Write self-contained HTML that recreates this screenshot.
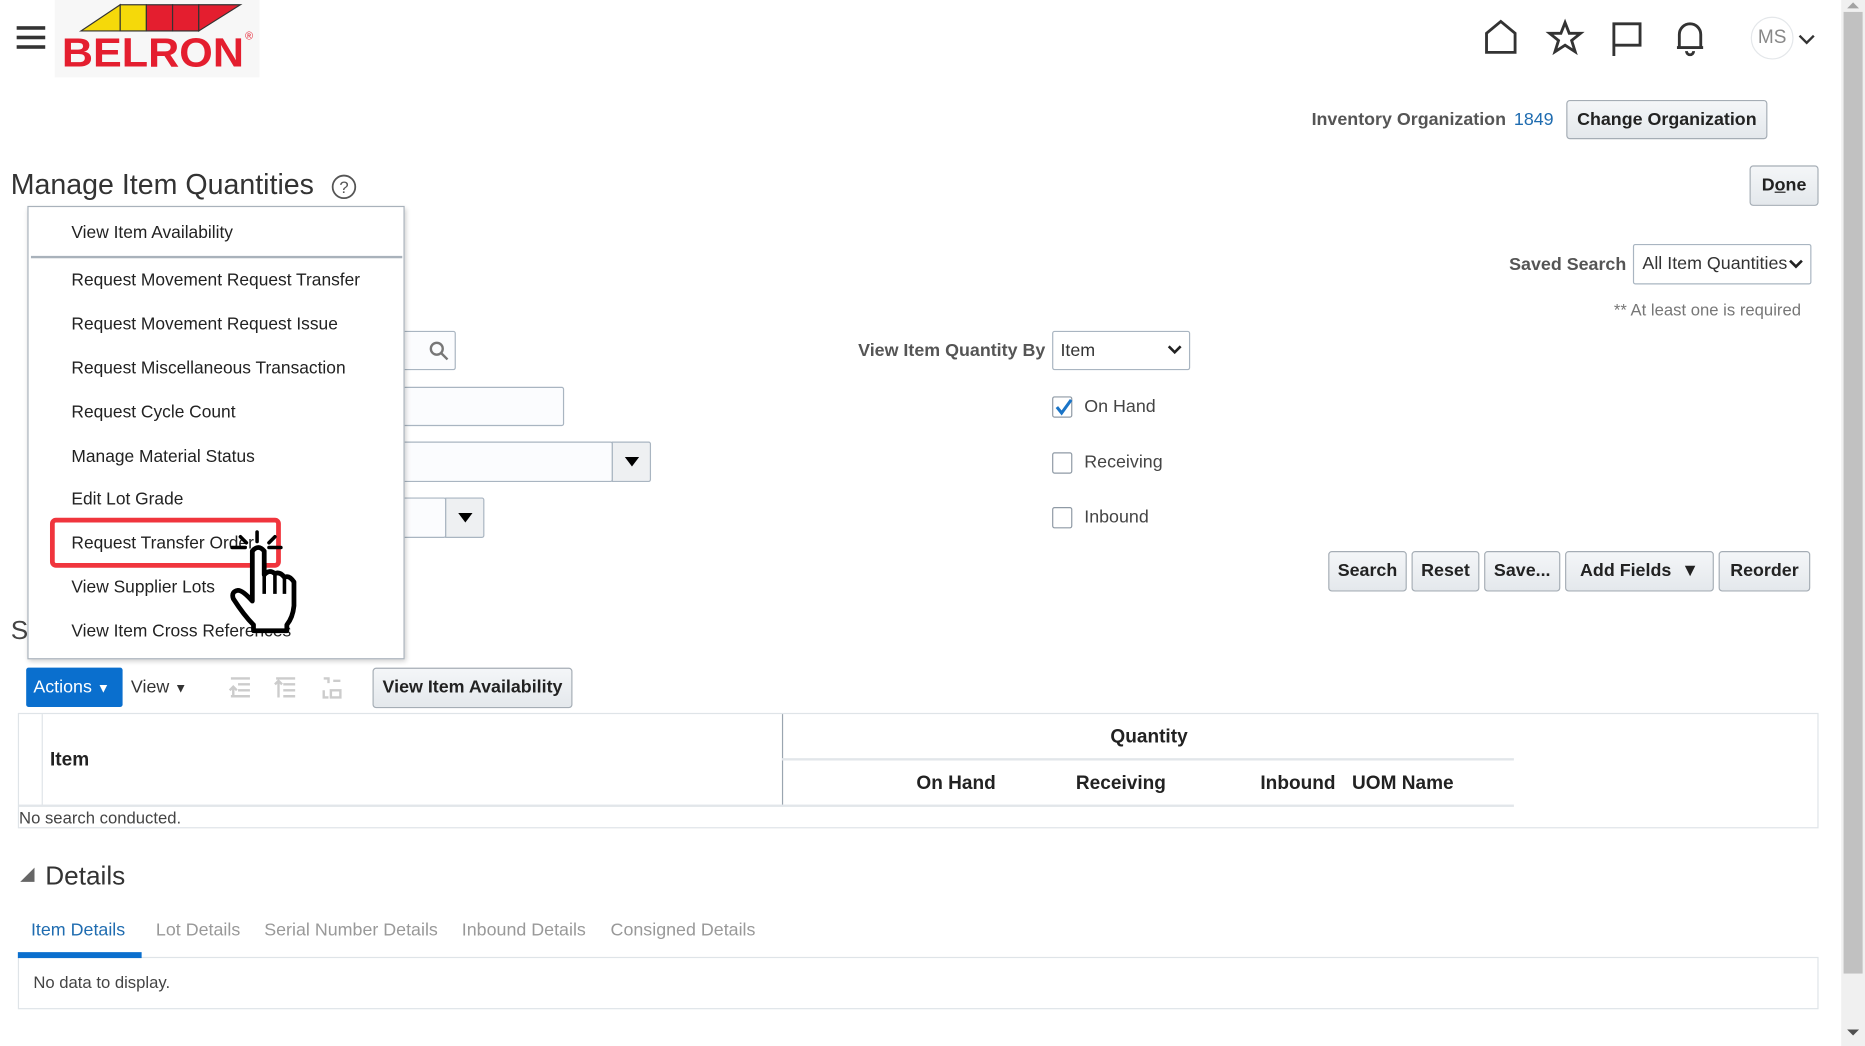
<!DOCTYPE html>
<html><head><meta charset="utf-8">
<style>
html,body{margin:0;padding:0;width:1865px;height:1046px;overflow:hidden;background:#fff;}
#w{position:absolute;left:0;top:0;width:1567px;height:879px;transform:scale(1.19017);transform-origin:0 0;font-family:"Liberation Sans",Arial,sans-serif;color:#333;}
.a{position:absolute;}
.btn{position:absolute;box-sizing:border-box;border:1px solid #a5adb5;border-radius:3px;background:linear-gradient(#f4f6f8,#e4e8ec);font-weight:bold;font-size:15px;color:#222;text-align:center;}
.inp{position:absolute;box-sizing:border-box;border:1px solid #a9b5c1;border-radius:2px;background:#fbfcfe;}
.dd{position:absolute;box-sizing:border-box;border:1px solid #a9b5c1;background:#eef0f2;border-radius:0 2px 2px 0;}
.dd:after{content:"";position:absolute;left:50%;top:50%;margin:-4px 0 0 -6px;border:6px solid transparent;border-top:8px solid #000;border-bottom:0;}
.mi{position:absolute;font-size:14.6px;color:#222;}
.cb{position:absolute;width:17px;height:18px;box-sizing:border-box;border:1px solid #8f9aa5;border-radius:2px;background:#fff;}
.lbl{position:absolute;font-size:15px;color:#444;}
</style></head><body><div id="w">

<div class="a" style="left:14px;top:22px;width:24px;height:3px;background:#333"></div>
<div class="a" style="left:14px;top:30px;width:24px;height:3px;background:#333"></div>
<div class="a" style="left:14px;top:38px;width:24px;height:3px;background:#333"></div>
<div class="a" style="left:46px;top:0;width:172px;height:65px;background:#f7f7f7"></div>
<svg class="a" style="left:46px;top:0" width="172" height="65">
<polygon points="22,26 55,4 55,26" fill="#f5d90a" stroke="#333" stroke-width="1"/>
<rect x="55" y="4" width="22" height="22" fill="#f5d90a" stroke="#333" stroke-width="1"/>
<rect x="77" y="4" width="22" height="22" fill="#e41e2f" stroke="#333" stroke-width="1"/>
<rect x="99" y="4" width="22" height="22" fill="#e41e2f" stroke="#333" stroke-width="1"/>
<polygon points="121,4 156,4 121,26" fill="#e41e2f" stroke="#333" stroke-width="1"/>
<text x="6" y="56" font-family="Liberation Sans" font-weight="bold" font-size="34" textLength="153" lengthAdjust="spacingAndGlyphs" fill="#e41e2f">BELRON</text>
<text x="160" y="33" font-family="Liberation Sans" font-size="9" fill="#e41e2f">®</text>
</svg>
<svg class="a" style="left:1245px;top:15px" width="300" height="36" fill="none" stroke="#333" stroke-width="2.4">
<path d="M4 29 V13 L16 3 L28 13 V29 Z"/>
<path d="M70 4 L73.5 13 L83 13 L75.5 19 L78.5 28.5 L70 23 L61.5 28.5 L64.5 19 L57 13 L66.5 13 Z"/>
<path d="M111 32 V5 H133 V23 H111"/>
<path d="M166 25 V14 a9 9 0 0 1 18 0 V25 H164 M186 25 H164 M172 28 a3 3 0 0 0 6 0"/>
</svg>
<div class="a" style="left:1471px;top:14px;width:36px;height:36px;border:1px solid #e4e7ea;border-radius:50%;box-sizing:border-box;font-size:16px;color:#888;text-align:center;line-height:34px">MS</div>
<svg class="a" style="left:1511px;top:28px" width="14" height="10" fill="none" stroke="#333" stroke-width="2"><path d="M1 2 L7 8 L13 2"/></svg>

<div class="a" style="left:1102px;top:92px;font-size:15px;font-weight:bold;color:#555">Inventory Organization</div>
<div class="a" style="left:1272px;top:92px;font-size:15px;color:#1f6cb0">1849</div>
<div class="btn" style="left:1316px;top:84px;width:169px;height:33px;line-height:31px">Change Organization</div>
<div class="btn" style="left:1470px;top:139px;width:58px;height:34px;line-height:32px"><span>D<u>o</u>ne</span></div>

<div class="a" style="left:9px;top:142px;font-size:24px;color:#333">Manage Item Quantities</div>
<svg class="a" style="left:278px;top:146px" width="22" height="22"><circle cx="11" cy="11" r="9.5" fill="none" stroke="#555" stroke-width="1.5"/><text x="11" y="16" text-anchor="middle" font-family="Liberation Sans" font-size="14" fill="#555">?</text></svg>

<div class="a" style="left:1268px;top:214px;font-size:15px;font-weight:bold;color:#555">Saved Search</div>
<div class="inp" style="left:1372px;top:205px;width:150px;height:34px;background:#fff;font-size:15px;color:#333;line-height:32px;padding-left:7px">All Item Quantities</div>
<svg class="a" style="left:1503px;top:218px" width="12" height="9" fill="none" stroke="#222" stroke-width="2.2"><path d="M1 1 L6 6 L11 1"/></svg>
<div class="a" style="left:1356px;top:252px;font-size:14px;color:#777">** At least one is required</div>

<div class="inp" style="left:300px;top:278px;width:83px;height:33px"></div>
<svg class="a" style="left:360px;top:286px" width="18" height="18" fill="none" stroke="#777" stroke-width="2"><circle cx="7" cy="7" r="5"/><path d="M11 11 L16 16"/></svg>
<div class="inp" style="left:300px;top:325px;width:174px;height:33px"></div>
<div class="inp" style="left:300px;top:371px;width:215px;height:34px"></div>
<div class="dd" style="left:514px;top:371px;width:33px;height:34px"></div>
<div class="inp" style="left:300px;top:418px;width:75px;height:34px"></div>
<div class="dd" style="left:374px;top:418px;width:33px;height:34px"></div>

<div class="a" style="left:721px;top:286px;font-size:15px;font-weight:bold;color:#555">View Item Quantity By</div>
<div class="inp" style="left:884px;top:278px;width:116px;height:33px;background:#fff;font-size:15px;line-height:31px;padding-left:6px;color:#333">Item</div>
<svg class="a" style="left:981px;top:290px" width="12" height="9" fill="none" stroke="#222" stroke-width="2.2"><path d="M1 1 L6 6 L11 1"/></svg>
<div class="cb" style="left:884px;top:333px"></div>
<svg class="a" style="left:885px;top:333px" width="18" height="18" fill="none" stroke="#1a74c7" stroke-width="2.6"><path d="M3 9 L7 14 L15 3"/></svg>
<div class="lbl" style="left:911px;top:333px">On Hand</div>
<div class="cb" style="left:884px;top:380px"></div>
<div class="lbl" style="left:911px;top:380px">Receiving</div>
<div class="cb" style="left:884px;top:426px"></div>
<div class="lbl" style="left:911px;top:426px">Inbound</div>

<div class="btn" style="left:1116px;top:463px;width:66px;height:34px;line-height:32px">Search</div>
<div class="btn" style="left:1186px;top:463px;width:57px;height:34px;line-height:32px">Reset</div>
<div class="btn" style="left:1247px;top:463px;width:64px;height:34px;line-height:32px">Save...</div>
<div class="btn" style="left:1315px;top:463px;width:125px;height:34px;line-height:32px">Add Fields &nbsp;▼</div>
<div class="btn" style="left:1444px;top:463px;width:77px;height:34px;line-height:32px">Reorder</div>

<div class="a" style="left:9px;top:517px;font-size:22px;color:#444">S</div>

<div class="a" style="left:22px;top:561px;width:81px;height:33px;background:#0a6fce;border-radius:2px;color:#fff;font-size:15px;line-height:33px;padding-left:6px;box-sizing:border-box">Actions <span style="font-size:11px">▼</span></div>
<div class="a" style="left:110px;top:569px;font-size:15px;color:#333">View <span style="font-size:11px">▼</span></div>
<svg class="a" style="left:192px;top:568px" width="100" height="20" fill="none" stroke="#ccc" stroke-width="2">
<path d="M2 2 H18 M8 7 H18 M8 12 H18 M2 17 H18 M4 17 V9 M1 12 L4 9 L7 12"/>
<path d="M40 2 H56 M46 7 H56 M46 12 H56 M46 17 H56 M42 4 V18 M39 7 L42 4 L45 7"/>
<path d="M80 2 H84 V6 M88 4 H94 M80 12 V18 H84 M86 12 H94 V18 H86 Z"/>
</svg>
<div class="btn" style="left:313px;top:561px;width:168px;height:34px;line-height:32px">View Item Availability</div>

<div class="a" style="left:15px;top:599px;width:1513px;height:97px;border:1px solid #dfe4e8;box-sizing:border-box"></div>
<div class="a" style="left:35px;top:600px;width:1px;height:77px;background:#dfe4e8"></div>
<div class="a" style="left:657px;top:600px;width:1px;height:77px;background:#9aa5b0"></div>
<div class="a" style="left:657px;top:637px;width:615px;height:2px;background:#e2e6ea"></div>
<div class="a" style="left:16px;top:676px;width:1256px;height:2px;background:#e2e6ea"></div>
<div class="a" style="left:42px;top:630px;font-size:16px;font-weight:bold;color:#222">Item</div>
<div class="a" style="left:933px;top:611px;font-size:16px;font-weight:bold;color:#222">Quantity</div>
<div class="a" style="left:770px;top:650px;font-size:16px;font-weight:bold;color:#222">On Hand</div>
<div class="a" style="left:904px;top:650px;font-size:16px;font-weight:bold;color:#222">Receiving</div>
<div class="a" style="left:1059px;top:650px;font-size:16px;font-weight:bold;color:#222">Inbound</div>
<div class="a" style="left:1136px;top:650px;font-size:16px;font-weight:bold;color:#222">UOM Name</div>
<div class="a" style="left:16px;top:679px;font-size:14px;color:#444">No search conducted.</div>

<svg class="a" style="left:16px;top:728px" width="14" height="14"><polygon points="13,1 13,13 1,13" fill="#666"/></svg>
<div class="a" style="left:38px;top:723px;font-size:22px;color:#333">Details</div>
<div class="a" style="left:26px;top:773px;font-size:15px;color:#1f6cb0">Item Details</div>
<div class="a" style="left:131px;top:773px;font-size:15px;color:#999">Lot Details</div>
<div class="a" style="left:222px;top:773px;font-size:15px;color:#999">Serial Number Details</div>
<div class="a" style="left:388px;top:773px;font-size:15px;color:#999">Inbound Details</div>
<div class="a" style="left:513px;top:773px;font-size:15px;color:#999">Consigned Details</div>
<div class="a" style="left:15px;top:804px;width:1513px;height:44px;border:1px solid #dfe4e8;box-sizing:border-box"></div>
<div class="a" style="left:15px;top:800px;width:104px;height:5px;background:#0a6fce"></div>
<div class="a" style="left:28px;top:817px;font-size:14px;color:#444">No data to display.</div>

<div class="a" style="left:1547px;top:0;width:20px;height:879px;background:#f0f0f0"></div>
<div class="a" style="left:1549px;top:10px;width:16px;height:808px;background:#c1c1c1"></div>
<svg class="a" style="left:1551px;top:1px" width="12" height="8"><polygon points="6,1 11,6 1,6" fill="#a3a3a3"/></svg>
<svg class="a" style="left:1551px;top:864px" width="12" height="8"><polygon points="1,1 11,1 6,6" fill="#505050"/></svg>

<div class="a" style="left:23px;top:173px;width:317px;height:381px;background:#fff;border:1px solid #a9b2bb;box-sizing:border-box;box-shadow:1px 2px 4px rgba(0,0,0,.2)"></div>
<div class="a" style="left:26px;top:215px;width:312px;height:2px;background:#a9b2bb"></div>
<div class="mi" style="left:60px;top:188px">View Item Availability</div>
<div class="mi" style="left:60px;top:228px">Request Movement Request Transfer</div>
<div class="mi" style="left:60px;top:265px">Request Movement Request Issue</div>
<div class="mi" style="left:60px;top:302px">Request Miscellaneous Transaction</div>
<div class="mi" style="left:60px;top:339px">Request Cycle Count</div>
<div class="mi" style="left:60px;top:376px">Manage Material Status</div>
<div class="mi" style="left:60px;top:412px">Edit Lot Grade</div>
<div class="mi" style="left:60px;top:449px">Request Transfer Order</div>
<div class="mi" style="left:60px;top:486px">View Supplier Lots</div>
<div class="mi" style="left:60px;top:523px">View Item Cross References</div>
<div class="a" style="left:42px;top:435px;width:194px;height:42px;border:4px solid #f0353d;border-radius:5px;box-sizing:border-box"></div>

<svg class="a" style="left:190px;top:443px" width="64" height="90">
<g stroke="#000" stroke-width="3" fill="none" stroke-linecap="round">
<path d="M26 4 V12"/><path d="M5 17 H16"/><path d="M36 17 H46"/><path d="M12 8 L17 13"/><path d="M41 8 L36 13"/>
</g>
<path d="M22 20 Q27 14 32 20 V40 Q36 35 41 39 Q45 37 49 42 Q53 40 57 46 V66 Q56 76 51 82 V87 H23 V82 Q15 74 6 60 Q4 54 10 53 Q14 53 22 62 Z" fill="#fff" stroke="#000" stroke-width="4" stroke-linejoin="round"/>
<path d="M32 40 V56 M41 39 V56 M49 42 V56" stroke="#000" stroke-width="3"/>
</svg>

</div></body></html>
